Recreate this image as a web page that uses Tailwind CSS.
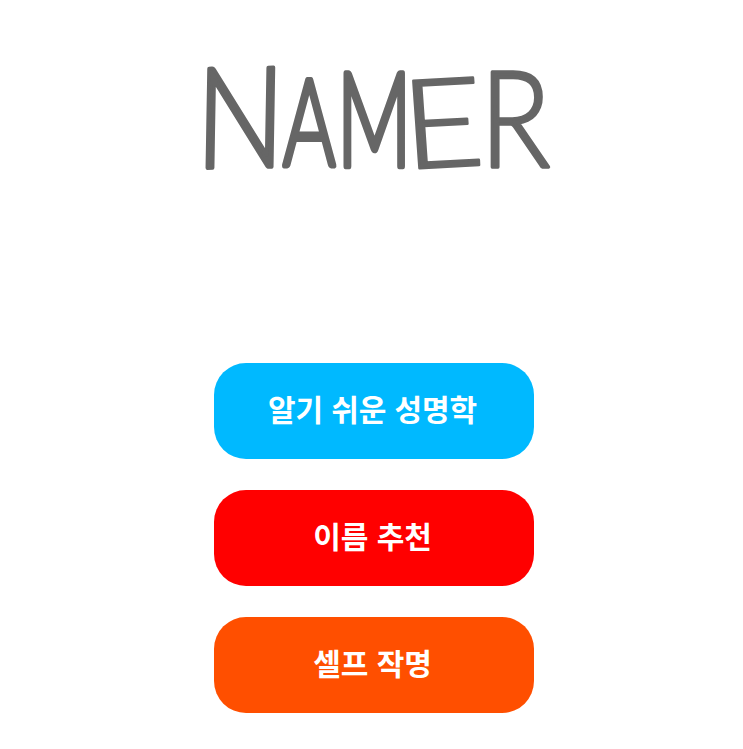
<!DOCTYPE html>
<html lang="ko">
<head>
    <meta charset="UTF-8">
    <meta name="viewport" content="width=device-width, initial-scale=1.0">
    <title>NAMER</title>
    <script src="https://cdn.jsdelivr.net/npm/@tailwindcss/browser@4"></script>
</head>
<body class="min-h-screen bg-white overflow-hidden flex flex-col items-center font-['Noto_Sans_CJK_KR','Noto_Sans',sans-serif]">

    <!-- Logo -->
    <header class="w-full">
        <svg class="block w-full h-[240px] overflow-visible font-['Lato','Open_Sans',sans-serif] font-light" viewBox="0 0 743 240" fill="#666" stroke="#666" stroke-linejoin="round" font-size="100" role="img" aria-label="NAMER">
            <text transform="translate(195 168) rotate(-1) skewX(-2) scale(1.18 1.4)" stroke-width="3">N</text>
            <text transform="translate(283 165) scale(0.80 1.2)" stroke-width="5">A</text>
            <text transform="translate(337 166) scale(0.82 1.3)" stroke-width="5">M</text>
            <text transform="translate(405 169) rotate(-3) skewX(1) scale(1.4 1.24)" stroke-width="2">E</text>
            <text transform="translate(480 167) scale(1.16 1.35)" stroke-width="2.5">R</text>
        </svg>
    </header>

    <!-- Menu -->
    <main class="mt-[122.5px] ml-1 w-80 flex flex-col gap-[31.5px] text-[30px] leading-none tracking-[-0.1px] [word-spacing:-1px] font-bold text-white">
        <button type="button" class="h-24 pb-1.5 pr-0.5 rounded-[32px] bg-[#00b9ff]">알기 쉬운 성명학</button>
        <button type="button" class="h-[95.5px] pb-1.5 pr-0.5 rounded-[32px] bg-[#ff0000]">이름 추천</button>
        <button type="button" class="h-24 pb-1.5 pr-0.5 rounded-[32px] bg-[#ff4f00]">셀프 작명</button>
    </main>

</body>
</html>
